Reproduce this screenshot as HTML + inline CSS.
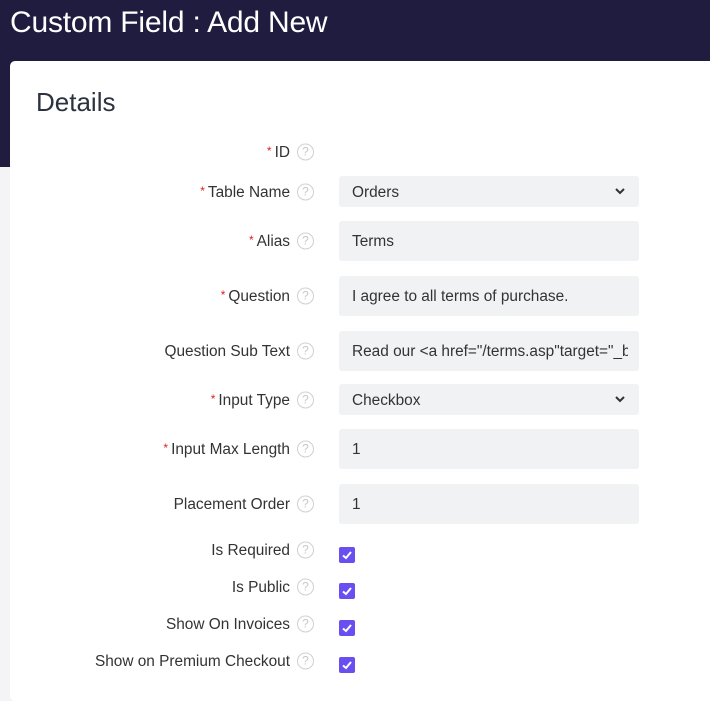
<!DOCTYPE html>
<html><head><style>
*{margin:0;padding:0;box-sizing:border-box}
body{width:710px;height:685px;overflow:hidden;background:#f4f4f6;font-family:"Liberation Sans",sans-serif;position:relative;color:#333}
.hdr{position:absolute;left:0;top:0;width:710px;height:167px;background:#201c3f}
.hdr h1{position:absolute;left:10px;top:6px;font-size:30px;font-weight:normal;color:#fff;letter-spacing:-0.2px}
.panel{position:absolute;left:10px;top:61px;width:710px;height:640px;background:#fff;border-radius:5px}
.det{position:absolute;left:36px;top:87px;font-size:26px;color:#2c3340}
.lbl{position:absolute;right:420px;font-size:15.4px;color:#333;transform:translateY(-50%);white-space:nowrap;margin-top:1px}
.lbl b{color:#e02020;font-weight:normal;font-size:12px;position:relative;top:-2px;margin-right:3px}
.q{position:absolute;left:297px;width:17px;height:17px;border:1.5px solid #d0d0d0;border-radius:50%;color:#c8c8c8;font-size:12px;text-align:center;line-height:14px;transform:translateY(-50%)}
.in{position:absolute;left:339px;width:300px;background:#f1f2f4;border-radius:3px;font-size:15.4px;color:#333;padding-left:13px;white-space:nowrap;overflow:hidden}
.in span{display:block;width:276px;overflow:hidden;padding-top:1px}
.cb{position:absolute;left:339px;width:16px;height:16px;background:#6a4ff0;border-radius:2px;transform:translateY(-50%)}
</style></head><body>
<div class="hdr"><h1>Custom Field : Add New</h1></div>
<div class="panel"></div>
<div class="det">Details</div>

<div class="lbl" style="top:152px"><b>*</b>ID</div><div class="q" style="top:152px">?</div>

<div class="lbl" style="top:192px"><b>*</b>Table Name</div><div class="q" style="top:192px">?</div>
<div class="in" style="top:176px;height:31px;line-height:31px"><span>Orders</span><svg style="position:absolute;right:14px;top:12px" width="10" height="7" viewBox="0 0 10 7"><path d="M1 1l4 4 4-4" stroke="#333" stroke-width="2" fill="none"/></svg></div>

<div class="lbl" style="top:241px"><b>*</b>Alias</div><div class="q" style="top:241px">?</div>
<div class="in" style="top:221px;height:40px;line-height:40px"><span>Terms</span></div>

<div class="lbl" style="top:296px"><b>*</b>Question</div><div class="q" style="top:296px">?</div>
<div class="in" style="top:276px;height:40px;line-height:40px"><span>I agree to all terms of purchase.</span></div>

<div class="lbl" style="top:351px">Question Sub Text</div><div class="q" style="top:351px">?</div>
<div class="in" style="top:331px;height:40px;line-height:40px"><span>Read our &lt;a href="/terms.asp"target="_blank"&gt;</span></div>

<div class="lbl" style="top:400px"><b>*</b>Input Type</div><div class="q" style="top:400px">?</div>
<div class="in" style="top:384px;height:31px;line-height:31px"><span>Checkbox</span><svg style="position:absolute;right:14px;top:12px" width="10" height="7" viewBox="0 0 10 7"><path d="M1 1l4 4 4-4" stroke="#333" stroke-width="2" fill="none"/></svg></div>

<div class="lbl" style="top:449px"><b>*</b>Input Max Length</div><div class="q" style="top:449px">?</div>
<div class="in" style="top:429px;height:40px;line-height:40px"><span>1</span></div>

<div class="lbl" style="top:504px">Placement Order</div><div class="q" style="top:504px">?</div>
<div class="in" style="top:484px;height:40px;line-height:40px"><span>1</span></div>

<div class="lbl" style="top:550px">Is Required</div><div class="q" style="top:550px">?</div>
<div class="cb" style="top:555px"><svg width="16" height="16" viewBox="0 0 16 16"><path d="M4 8.5l3 2.5 5-6" stroke="#fff" stroke-width="2" fill="none"/></svg></div>
<div class="lbl" style="top:587px">Is Public</div><div class="q" style="top:587px">?</div>
<div class="cb" style="top:591px"><svg width="16" height="16" viewBox="0 0 16 16"><path d="M4 8.5l3 2.5 5-6" stroke="#fff" stroke-width="2" fill="none"/></svg></div>
<div class="lbl" style="top:624px">Show On Invoices</div><div class="q" style="top:624px">?</div>
<div class="cb" style="top:628px"><svg width="16" height="16" viewBox="0 0 16 16"><path d="M4 8.5l3 2.5 5-6" stroke="#fff" stroke-width="2" fill="none"/></svg></div>
<div class="lbl" style="top:661px">Show on Premium Checkout</div><div class="q" style="top:661px">?</div>
<div class="cb" style="top:665px"><svg width="16" height="16" viewBox="0 0 16 16"><path d="M4 8.5l3 2.5 5-6" stroke="#fff" stroke-width="2" fill="none"/></svg></div>
</body></html>
